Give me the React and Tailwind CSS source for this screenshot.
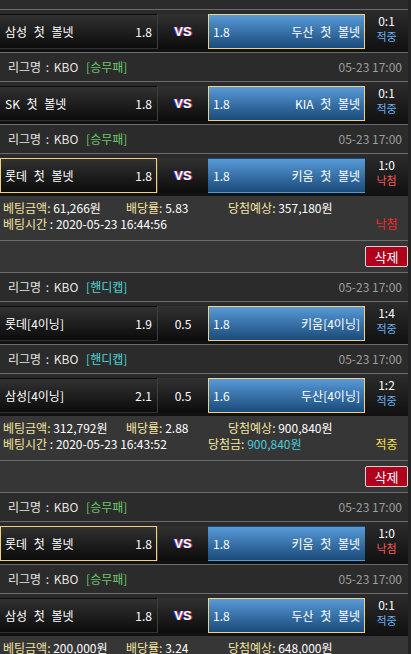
import React from "react";

const bets = [
  {
    picks: [
      { type: "[승무패]", home: "삼성 첫 볼넷", homeOdds: "1.8", mid: "VS", away: "두산 첫 볼넷", awayOdds: "1.8", pick: "away", score: "0:1", result: "적중", hideLeague: true },
      { type: "[승무패]", home: "SK 첫 볼넷", homeOdds: "1.8", mid: "VS", away: "KIA 첫 볼넷", awayOdds: "1.8", pick: "away", score: "0:1", result: "적중" },
      { type: "[승무패]", home: "롯데 첫 볼넷", homeOdds: "1.8", mid: "VS", away: "키움 첫 볼넷", awayOdds: "1.8", pick: "home", score: "1:0", result: "낙첨" },
    ],
    amount: "61,266원",
    rate: "5.83",
    expect: "357,180원",
    time: "2020-05-23 16:44:56",
    win: null,
    status: "낙첨",
  },
  {
    picks: [
      { type: "[핸디캡]", home: "롯데[4이닝]", homeOdds: "1.9", mid: "0.5", away: "키움[4이닝]", awayOdds: "1.8", pick: "away", score: "1:4", result: "적중" },
      { type: "[핸디캡]", home: "삼성[4이닝]", homeOdds: "2.1", mid: "0.5", away: "두산[4이닝]", awayOdds: "1.6", pick: "away", score: "1:2", result: "적중" },
    ],
    amount: "312,792원",
    rate: "2.88",
    expect: "900,840원",
    time: "2020-05-23 16:43:52",
    win: "900,840원",
    status: "적중",
  },
  {
    picks: [
      { type: "[승무패]", home: "롯데 첫 볼넷", homeOdds: "1.8", mid: "VS", away: "키움 첫 볼넷", awayOdds: "1.8", pick: "home", score: "1:0", result: "낙첨" },
      { type: "[승무패]", home: "삼성 첫 볼넷", homeOdds: "1.8", mid: "VS", away: "두산 첫 볼넷", awayOdds: "1.8", pick: "away", score: "0:1", result: "적중" },
    ],
    amount: "200,000원",
    rate: "3.24",
    expect: "648,000원",
    time: null,
    win: null,
    status: null,
  },
];

const LeagueRow = ({ type }) => (
  <div className="flex h-[29px] items-center justify-between border-t border-[#6c6c6c] bg-[#2b2b2b] pl-[8px] pr-[6px] text-[12px]">
    <p className="text-[#e6e6e6] [word-spacing:2px]">
      리그명 : KBO{" "}
      <span className={type === "[핸디캡]" ? "ml-[3px] text-[#4fd3d8]" : "ml-[3px] text-[#6cc66c]"}>{type}</span>
    </p>
    <p className="text-[#9d9d9d]">05-23 17:00</p>
  </div>
);

const MatchRow = ({ p }) => (
  <div className="flex h-[43px] border-t border-[#6c6c6c] bg-linear-to-b from-[#2c2c2c] to-[#101010] pt-[4px] pb-[3px] text-[12px] text-white">
    <div
      className={
        "flex h-[35px] w-[157px] items-center justify-between bg-linear-to-b from-[#323232] to-[#0c0c0c] px-[4px] [word-spacing:4px] " +
        (p.pick === "home" ? "border border-[#f3d27c]" : "border border-transparent")
      }
    >
      <span>{p.home}</span>
      <span>{p.homeOdds}</span>
    </div>
    <div className="flex h-[35px] w-[51px] items-center justify-center border-l border-[#3e3e3e] bg-linear-to-b from-[#323232] to-[#0c0c0c]">
      {p.mid === "VS" ? (
        <span className="font-['Liberation_Sans',sans-serif] text-[13px] font-bold text-white [text-shadow:-1px_0_#2b3fd0,1px_0_#d02b2b]">
          VS
        </span>
      ) : (
        <span>{p.mid}</span>
      )}
    </div>
    <div
      className={
        "flex h-[35px] w-[157px] items-center justify-between bg-linear-to-b from-[#579bd9] to-[#1b4b7b] px-[4px] [word-spacing:4px] " +
        (p.pick === "away" ? "border border-[#f3d27c]" : "border border-transparent")
      }
    >
      <span>{p.awayOdds}</span>
      <span>{p.away}</span>
    </div>
    <div className="flex w-[43px] flex-col items-center">
      <span className="text-[12px] leading-[14px] text-white">{p.score}</span>
      <span className={"mt-[1px] text-[11px] leading-[15px] " + (p.result === "적중" ? "text-[#6ab2f2]" : "text-[#ff5b5b]")}>
        {p.result}
      </span>
    </div>
  </div>
);

const Label = ({ children }) => <span className="text-[#f4e6a2]">{children}</span>;

const BetInfo = ({ bet }) => (
  <div className="h-[44px] pt-[4px] text-[12px] leading-[16px] text-white">
    <div className="flex">
      <p className="w-[126px] pl-[3px]">
        <Label>베팅금액:</Label> {bet.amount}
      </p>
      <p className="w-[102px]">
        <Label>배당률:</Label> {bet.rate}
      </p>
      <p>
        <Label>당첨예상:</Label> {bet.expect}
      </p>
    </div>
    {bet.time && (
      <div className="flex">
        <p className="w-[208px] pl-[3px]">
          <Label>베팅시간</Label> : {bet.time}
        </p>
        <p className="flex-1">
          {bet.win && (
            <>
              <Label>당첨금:</Label> <span className="text-[#4cc9d9]">{bet.win}</span>
            </>
          )}
        </p>
        <p className={"w-[43px] text-center " + (bet.status === "적중" ? "text-[#f5e04a]" : "text-[#ff2626]")}>
          {bet.status}
        </p>
      </div>
    )}
  </div>
);

const DeleteRow = () => (
  <div className="flex h-[32px] justify-end border-t border-[#6c6c6c] pt-[5px]">
    <button className="h-[21px] w-[43px] rounded-[2px] border border-[#d4d4d4] bg-[#b0001b] text-[13px] leading-[18px] text-white">
      삭제
    </button>
  </div>
);

const App = () => {
  return (
    <div className="h-screen overflow-hidden bg-[#242424] font-['Noto_Sans_CJK_KR','Noto_Sans',sans-serif]">
      <div className="w-[408px] bg-[#363636]">
        <div className="h-[9px] bg-[#2b2b2b]"></div>
        {bets.map((bet, index) => (
          <div key={index}>
            {bet.picks.map((p, i) => (
              <div key={i}>
                {!p.hideLeague && <LeagueRow type={p.type} />}
                <MatchRow p={p} />
              </div>
            ))}
            <BetInfo bet={bet} />
            {bet.status && <DeleteRow />}
          </div>
        ))}
      </div>
    </div>
  );
};

export default App;
